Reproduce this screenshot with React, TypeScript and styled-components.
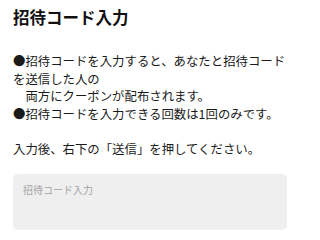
import React from 'react';
import styled, { createGlobalStyle } from 'styled-components';

const GlobalStyle = createGlobalStyle`
  html, body {
    margin: 0;
    padding: 0;
    background: #ffffff;
  }
  body {
    font-family: "Noto Sans CJK JP", "Noto Sans", sans-serif;
    color: #1a1a1a;
  }
`;

const Container = styled.div`
  width: 300px;
  box-sizing: border-box;
  padding: 5px 13px 0;
  display: flex;
  flex-direction: column;
`;

const Title = styled.h1`
  margin: 0;
  font-size: 16.5px;
  line-height: 24px;
  font-weight: 700;
  color: #111;
`;

const Notice = styled.p`
  margin: ${(p: { $top: number }) => p.$top}px 0 0;
  font-size: 12.4px;
  line-height: 17.5px;
  color: #1a1a1a;
  white-space: pre-wrap;
`;

const CodeInput = styled.textarea`
  margin-top: 16px;
  width: 274px;
  height: 56px;
  box-sizing: border-box;
  border: none;
  border-radius: 5px;
  background: #efefef;
  padding: 8px 10px;
  font-family: "Noto Sans CJK JP", "Noto Sans", sans-serif;
  font-size: 10px;
  line-height: 15px;
  resize: none;
  outline: none;

  &::placeholder {
    color: #a3a3a3;
  }
`;

const App = () => {
  return (
    <Container>
      <GlobalStyle />
      <Title>招待コード入力</Title>
      <Notice $top={24}>
        ●招待コードを入力すると、あなたと招待コードを送信した人の
        <br />
        {'　両方にクーポンが配布されます。'}
        <br />
        ●招待コードを入力できる回数は1回のみです。
      </Notice>
      <Notice $top={17.5}>入力後、右下の「送信」を押してください。</Notice>
      <CodeInput placeholder="招待コード入力" />
    </Container>
  );
};

export default App;
